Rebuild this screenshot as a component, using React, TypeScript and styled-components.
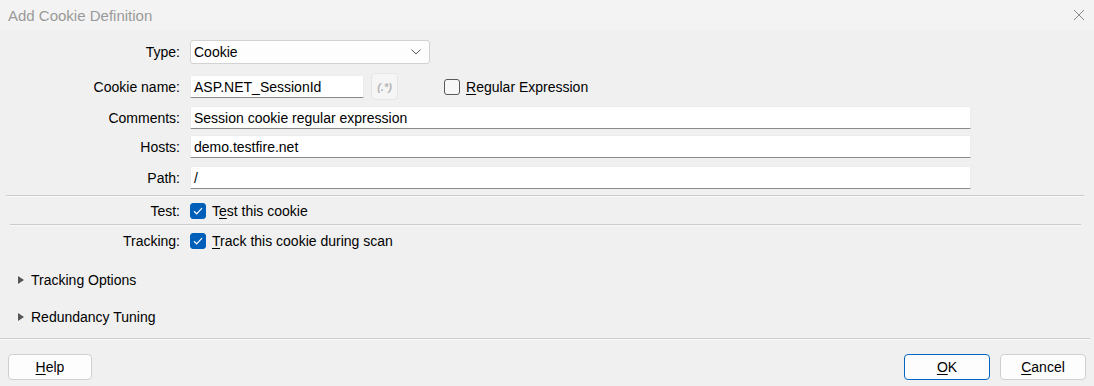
import React from "react";
import styled, { createGlobalStyle } from "styled-components";

const GlobalStyle = createGlobalStyle`
  html, body {
    margin: 0;
    padding: 0;
    background: #f0f0f0;
  }
  * {
    box-sizing: border-box;
  }
`;

const Window = styled.div`
  width: 1094px;
  height: 386px;
  display: flex;
  flex-direction: column;
  background: #f0f0f0;
  font-family: "Liberation Sans", Arial, sans-serif;
  font-size: 14px;
  color: #000;
  overflow: hidden;
`;

const TitleBar = styled.div`
  height: 30px;
  flex: 0 0 30px;
  display: flex;
  align-items: center;
  justify-content: space-between;
  padding: 0 8px;
  background: #f3f3f3;
`;

const Title = styled.span`
  font-size: 15px;
  color: #9a9a9a;
`;

const CloseButton = styled.button`
  width: 30px;
  height: 26px;
  border: none;
  background: transparent;
  display: flex;
  align-items: center;
  justify-content: center;
  padding: 0;
  margin-right: -8px;
`;

const Body = styled.div`
  flex: 1;
  display: flex;
  flex-direction: column;
  padding-top: 10px;
`;

const Row = styled.div<{ $h: number; $mt?: number }>`
  display: grid;
  grid-template-columns: 180px 1fr;
  column-gap: 10px;
  align-items: center;
  height: ${({ $h }) => $h}px;
  margin-top: ${({ $mt }) => $mt ?? 0}px;
  padding-right: 123px;
`;

const Label = styled.label`
  text-align: right;
  white-space: nowrap;
`;

const Field = styled.div`
  display: flex;
  align-items: center;
  min-width: 0;
`;

const Select = styled.div`
  width: 240px;
  height: 24px;
  display: flex;
  align-items: center;
  justify-content: space-between;
  padding: 0 8px 0 3px;
  background: #fdfdfd;
  border: 1px solid #d2d2d2;
  border-radius: 3px;
`;

const TextInput = styled.div<{ $w?: number }>`
  width: ${({ $w }) => ($w ? `${$w}px` : "100%")};
  height: 23px;
  display: flex;
  align-items: center;
  padding: 0 3px;
  background: #fff;
  border: 1px solid #ececec;
  border-bottom: 1px solid #8a8a8a;
  border-radius: 2px 2px 0 0;
  white-space: nowrap;
`;

const RegexButton = styled.div`
  width: 27px;
  height: 27px;
  margin-left: 7px;
  display: flex;
  align-items: center;
  justify-content: center;
  background: #f5f5f5;
  border: 1px solid #e6e6e6;
  border-radius: 4px;
  color: #b4b4b4;
  font-size: 11px;
  font-weight: bold;
  font-style: italic;
`;

const CheckLabel = styled.label<{ $ml?: number }>`
  display: flex;
  align-items: center;
  gap: 6px;
  margin-left: ${({ $ml }) => $ml ?? 0}px;
  white-space: nowrap;
`;

const Box = styled.span<{ $checked?: boolean }>`
  width: 16px;
  height: 16px;
  flex: 0 0 16px;
  border-radius: 3px;
  display: flex;
  align-items: center;
  justify-content: center;
  background: ${({ $checked }) => ($checked ? "#005fb8" : "#f7f7f7")};
  border: 1px solid ${({ $checked }) => ($checked ? "#005fb8" : "#5a5a5a")};
`;

const Key = styled.span`
  text-decoration: underline;
  text-underline-offset: 2px;
`;

const Separator = styled.div<{ $inset: number; $right: number; $mt: number }>`
  height: 2px;
  margin: ${({ $mt }) => $mt}px ${({ $right }) => $right}px 0 ${({ $inset }) => $inset}px;
  border-top: 1px solid #cbcbcb;
  border-bottom: 1px solid #f9f9f9;
`;

const Expander = styled.div<{ $mt: number }>`
  display: flex;
  align-items: center;
  gap: 7px;
  height: 20px;
  margin-top: ${({ $mt }) => $mt}px;
  padding-left: 18px;
`;

const Arrow = styled.span`
  width: 0;
  height: 0;
  border-top: 4px solid transparent;
  border-bottom: 4px solid transparent;
  border-left: 6px solid #555;
`;

const Footer = styled.div`
  display: flex;
  align-items: center;
  justify-content: space-between;
  padding: 14px 8px 0 8px;
`;

const ButtonGroup = styled.div`
  display: flex;
  gap: 10px;
`;

const Button = styled.button<{ $default?: boolean }>`
  width: 86px;
  height: 26px;
  padding: 0;
  font-family: inherit;
  font-size: 14px;
  color: #000;
  background: #fdfdfd;
  border: 1px solid ${({ $default }) => ($default ? "#0067c0" : "#d0d0d0")};
  border-radius: 4px;
`;

const HelpButton = styled(Button)`
  width: 84px;
`;

const Check = () => (
  <svg width="10" height="8" viewBox="0 0 10 8">
    <path d="M1 4.2 L3.7 6.8 L9 1.2" fill="none" stroke="#fff" strokeWidth="1.2" />
  </svg>
);

export default function App() {
  return (
    <>
      <GlobalStyle />
      <Window>
        <TitleBar>
          <Title>Add Cookie Definition</Title>
          <CloseButton aria-label="Close">
            <svg width="12" height="12" viewBox="0 0 12 12">
              <path d="M1 1 L11 11 M11 1 L1 11" stroke="#8a8a8a" strokeWidth="1" />
            </svg>
          </CloseButton>
        </TitleBar>
        <Body>
          <Row $h={24}>
            <Label>Type:</Label>
            <Field>
              <Select>
                <span>Cookie</span>
                <svg width="10" height="6" viewBox="0 0 10 6">
                  <path d="M0.5 0.5 L5 5 L9.5 0.5" fill="none" stroke="#555" strokeWidth="1" />
                </svg>
              </Select>
            </Field>
          </Row>
          <Row $h={27} $mt={9}>
            <Label>Cookie name:</Label>
            <Field>
              <TextInput $w={174}>ASP.NET_SessionId</TextInput>
              <RegexButton>(.*)</RegexButton>
              <CheckLabel $ml={46}>
                <Box />
                <span>
                  <Key>R</Key>egular Expression
                </span>
              </CheckLabel>
            </Field>
          </Row>
          <Row $h={23} $mt={6}>
            <Label>Comments:</Label>
            <Field>
              <TextInput>Session cookie regular expression</TextInput>
            </Field>
          </Row>
          <Row $h={23} $mt={6}>
            <Label>Hosts:</Label>
            <Field>
              <TextInput>demo.testfire.net</TextInput>
            </Field>
          </Row>
          <Row $h={23} $mt={8}>
            <Label>Path:</Label>
            <Field>
              <TextInput>/</TextInput>
            </Field>
          </Row>
          <Separator $inset={6} $right={10} $mt={6} />
          <Row $h={18} $mt={5}>
            <Label>Test:</Label>
            <Field>
              <CheckLabel>
                <Box $checked>
                  <Check />
                </Box>
                <span>
                  T<Key>e</Key>st this cookie
                </span>
              </CheckLabel>
            </Field>
          </Row>
          <Separator $inset={10} $right={13} $mt={4} />
          <Row $h={18} $mt={6}>
            <Label>Tracking:</Label>
            <Field>
              <CheckLabel>
                <Box $checked>
                  <Check />
                </Box>
                <span>
                  <Key>T</Key>rack this cookie during scan
                </span>
              </CheckLabel>
            </Field>
          </Row>
          <Expander $mt={20}>
            <Arrow />
            <span>Tracking Options</span>
          </Expander>
          <Expander $mt={17}>
            <Arrow />
            <span>Redundancy Tuning</span>
          </Expander>
          <Separator $inset={0} $right={4} $mt={11} />
          <Footer>
            <HelpButton>
              <Key>H</Key>elp
            </HelpButton>
            <ButtonGroup>
              <Button $default>
                <Key>O</Key>K
              </Button>
              <Button>
                <Key>C</Key>ancel
              </Button>
            </ButtonGroup>
          </Footer>
        </Body>
      </Window>
    </>
  );
}
